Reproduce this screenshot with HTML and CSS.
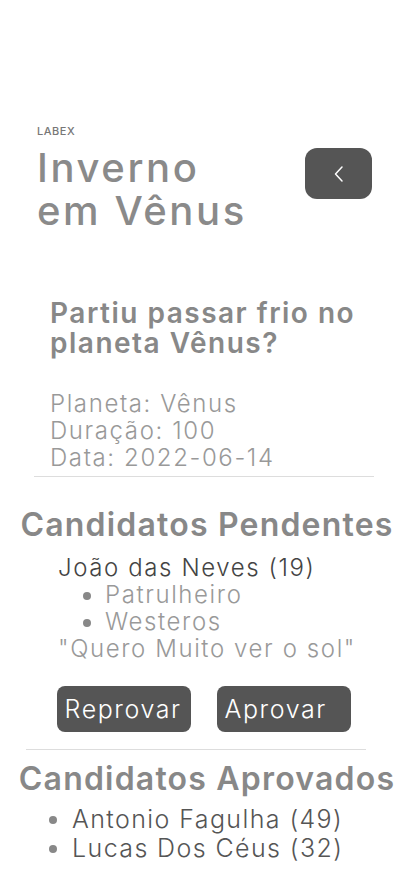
FILE: index.html
```html
<!DOCTYPE html>
<html lang="pt-BR">
<head>
<meta charset="utf-8">
<title>Inverno em Vênus</title>
<link rel="stylesheet" href="styles.css">
</head>
<body>
<main class="page">
  <header class="header">
    <div class="heading">
      <span class="brand">LABEX</span>
      <h1 class="title">Inverno<br>em Vênus</h1>
    </div>
    <button class="back" type="button" aria-label="Voltar">
      <svg width="14" height="20" viewBox="0 0 14 20"><path d="M10 3 L3.5 10 L10 17" fill="none" stroke="#fff" stroke-width="1.5" stroke-linecap="round" stroke-linejoin="round"/></svg>
    </button>
  </header>

  <section class="trip">
    <h2 class="trip-name">Partiu passar frio no planeta Vênus?</h2>
    <p class="trip-info">Planeta: Vênus<br>Duração: 100<br>Data: 2022-06-14</p>
  </section>

  <section class="pending">
    <h2 class="section-title">Candidatos Pendentes</h2>
    <div class="candidate">
      <div class="cand-name">João das Neves (19)</div>
      <ul class="cand-list">
        <li>Patrulheiro</li>
        <li>Westeros</li>
      </ul>
      <div class="cand-text">"Quero Muito ver o sol"</div>
    </div>
    <div class="actions">
      <button class="btn" type="button">Reprovar</button>
      <button class="btn" type="button">Aprovar</button>
    </div>
  </section>

  <hr class="divider">

  <section class="approved">
    <h2 class="section-title">Candidatos Aprovados</h2>
    <ul class="approved-list">
      <li>Antonio Fagulha (49)</li>
      <li>Lucas Dos Céus (32)</li>
    </ul>
  </section>
</main>
</body>
</html>
```

FILE: styles.css
```css
* { box-sizing: border-box; }

body {
  margin: 0;
  background: #fff;
  font-family: Inter, "Open Sans", sans-serif;
  color: #888;
}

.page {
  padding-top: 124px;
  padding-bottom: 40px;
}

.header {
  display: flex;
  justify-content: space-between;
  align-items: flex-start;
  padding: 0 42px 0 37px;
}

.brand {
  display: block;
  font-size: 11px;
  line-height: 14px;
  font-weight: 500;
  color: #777;
  letter-spacing: 0.5px;
}

.title {
  margin: 8px 0 0;
  font-size: 40px;
  line-height: 43px;
  font-weight: 500;
  color: #8a8a8a;
  letter-spacing: 2.6px;
}

.back {
  margin-top: 24px;
  width: 67px;
  height: 51px;
  border: 0;
  border-radius: 12px;
  background: #555;
  display: flex;
  align-items: center;
  justify-content: center;
  padding: 0;
}

.trip {
  margin: 66px 40px 0 34px;
  padding: 0 16px 5px;
  border-bottom: 1px solid #ddd;
}

.trip-name {
  margin: 0;
  font-size: 28px;
  line-height: 30px;
  font-weight: 600;
  color: #888;
  letter-spacing: 1.5px;
}

.trip-info {
  margin: 32px 0 0;
  font-size: 24px;
  line-height: 27px;
  font-weight: 300;
  color: #999;
  letter-spacing: 1.6px;
}

.section-title {
  margin: 0;
  text-align: center;
  font-size: 32px;
  line-height: 40px;
  font-weight: 600;
  color: #888;
  letter-spacing: 1.2px;
}

.pending {
  padding-top: 28px;
}

.candidate {
  width: fit-content;
  margin: 9px auto 0;
  font-size: 24px;
  line-height: 27px;
  font-weight: 300;
  color: #999;
  letter-spacing: 1.6px;
}

.cand-name {
  color: #444;
}

.cand-list {
  margin: 0;
  padding-left: 47px;
}

.cand-list li::marker,
.approved-list li::marker {
  color: #888;
}

.actions {
  display: flex;
  justify-content: center;
  gap: 26px;
  margin-top: 24px;
  padding-right: 7px;
}

.btn {
  width: 134px;
  height: 46px;
  border: 0;
  border-radius: 8px;
  background: #555;
  color: #fff;
  font-family: inherit;
  font-size: 25px;
  font-weight: 300;
  letter-spacing: 1.6px;
  text-align: left;
  padding: 0 8px;
}

.divider {
  margin: 17px 48px 0 26px;
  border: 0;
  border-top: 1px solid #ddd;
  height: 0;
}

.approved {
  padding-top: 9px;
}

.approved-list {
  margin: 6px 0 0;
  padding-left: 72px;
  font-size: 25px;
  line-height: 29px;
  font-weight: 300;
  color: #555;
  letter-spacing: 1.4px;
}
```
